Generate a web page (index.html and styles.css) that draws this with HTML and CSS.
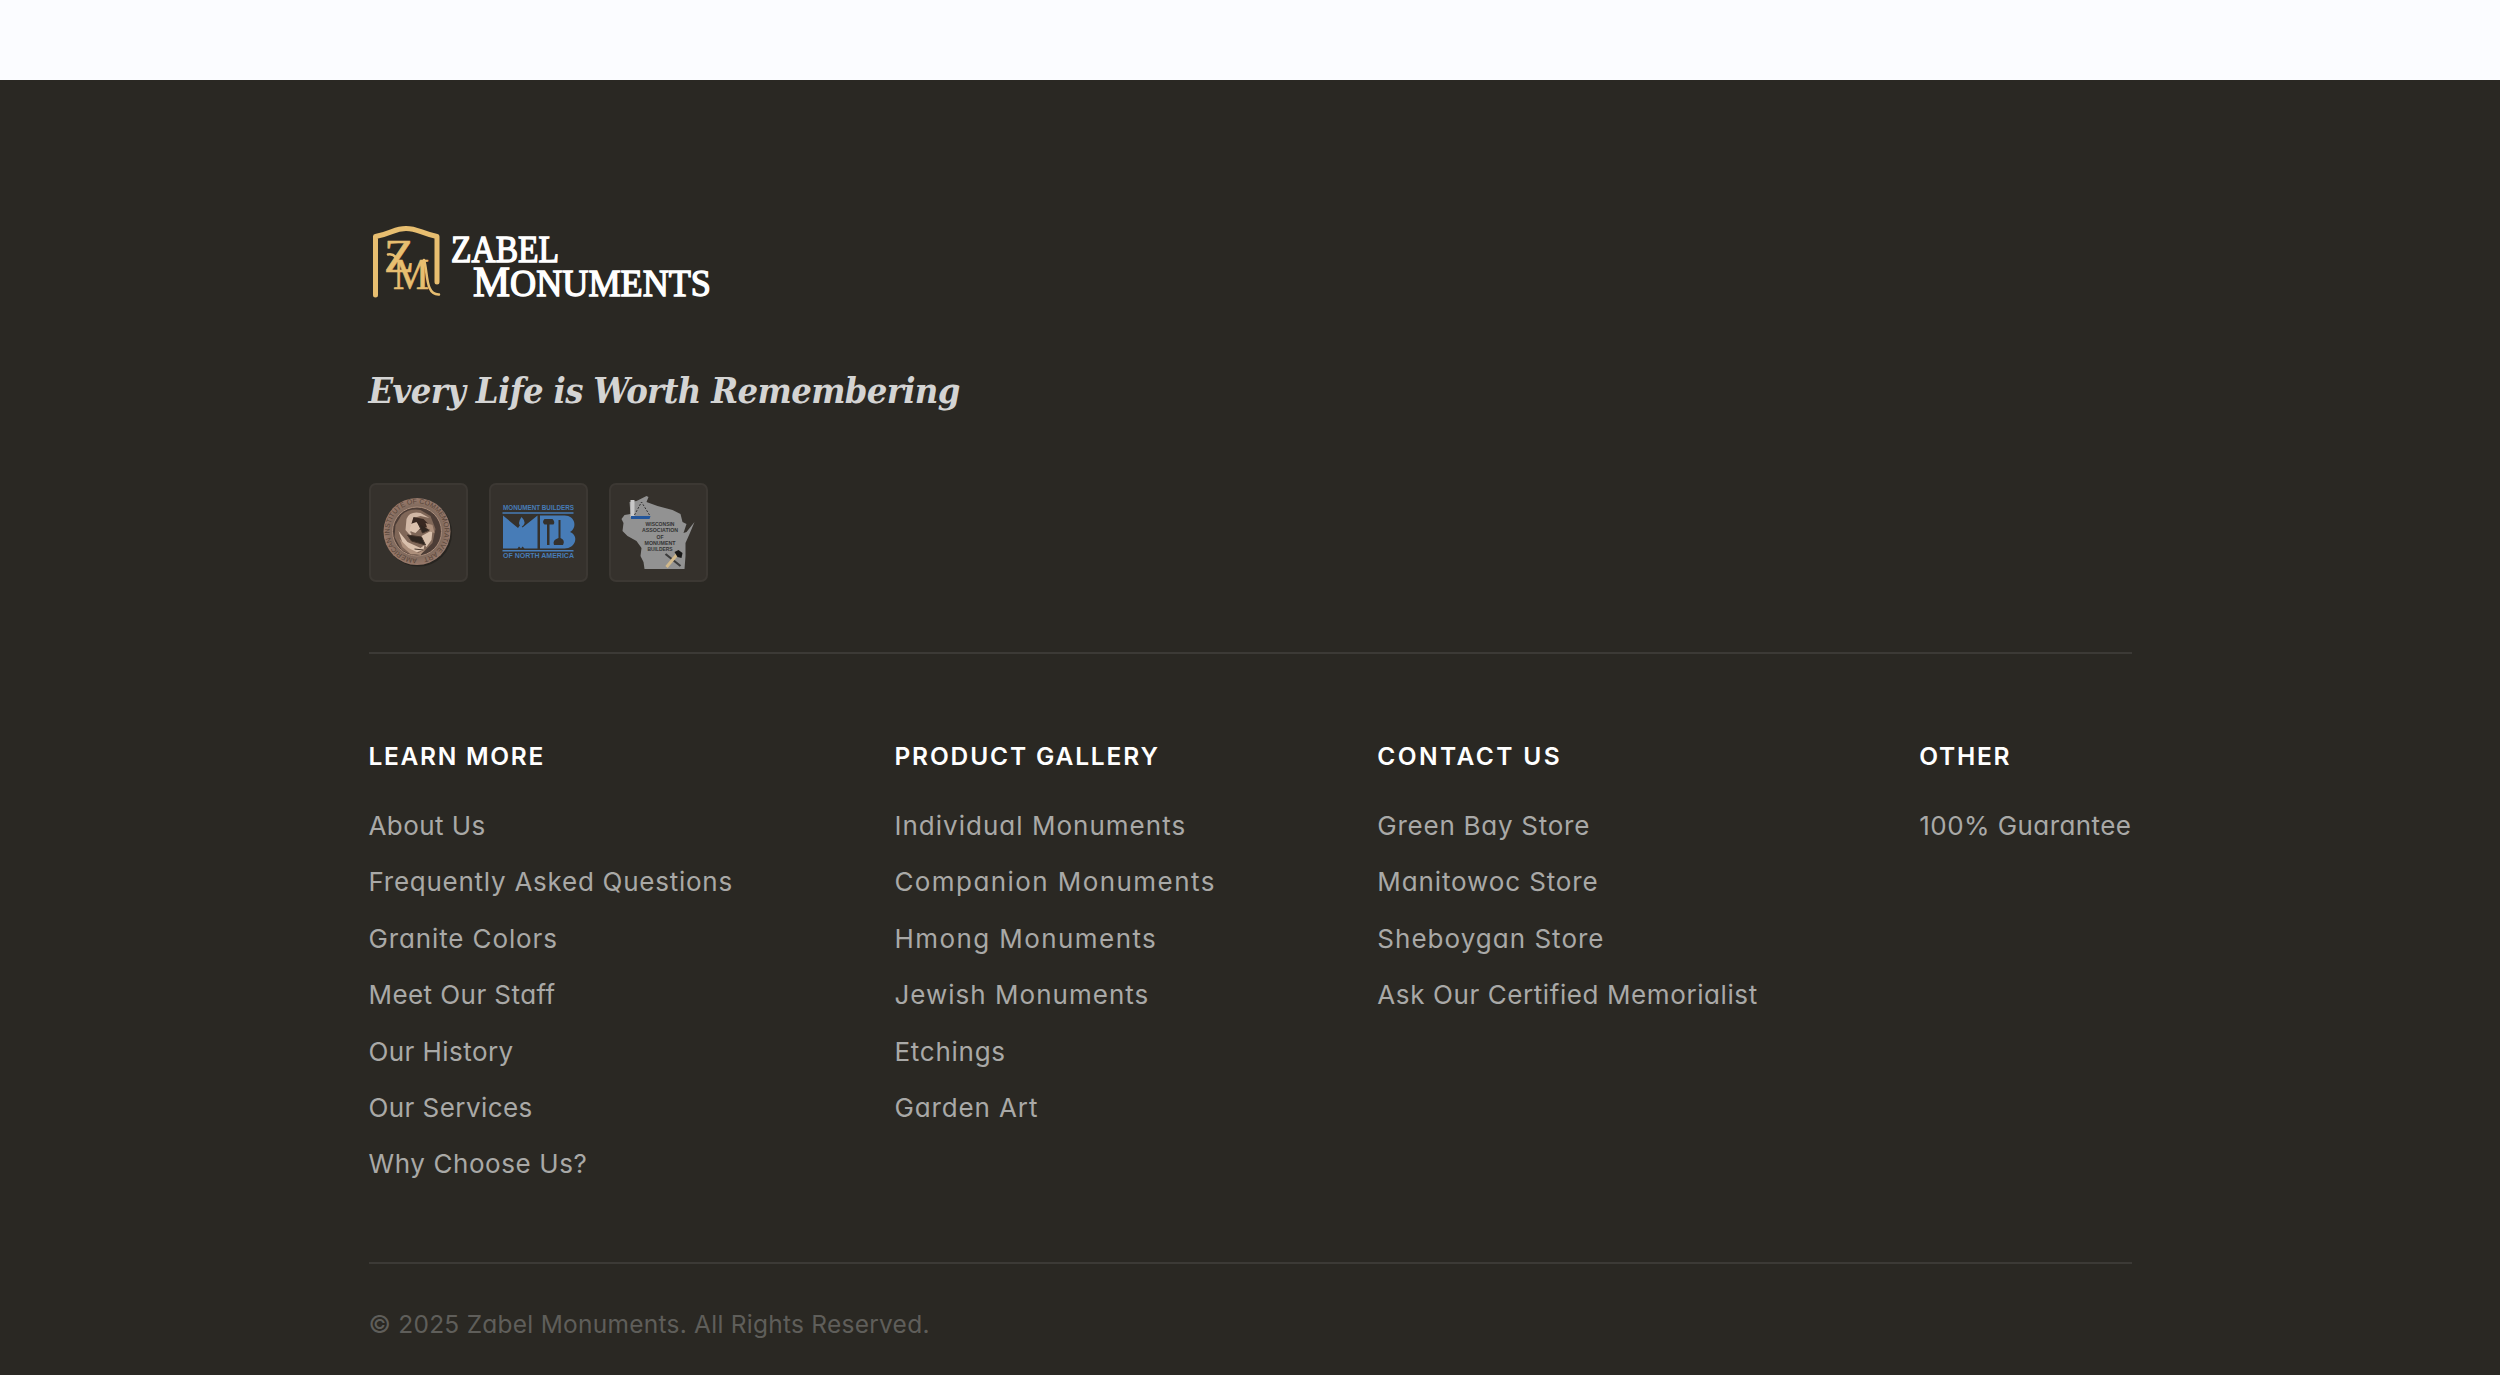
FILE: index.html
```html
<!DOCTYPE html>
<html lang="en">
<head>
<meta charset="utf-8">
<title>Zabel Monuments</title>
<link rel="stylesheet" href="styles.css">
</head>
<body>
<footer class="footer">
  <div class="inner">
    <div class="brand">
      <svg class="logo" viewBox="350 210 380 100" role="img" aria-label="Zabel Monuments">
        <g class="frame">
          <path d="M375.500 295V236.500C393 233 394 228.500 406 228.500S420 233 437 236.500V282"/>
          <path class="swash" d="M424 260C428 272 425 295 439 294.500M388 254.500q5-1 8 3"/>
        </g>
        <text class="mono" x="384" y="271.500" font-size="46" textLength="30" lengthAdjust="spacingAndGlyphs">Z</text>
        <text class="mono" x="393" y="288.500" font-size="45" textLength="36" lengthAdjust="spacingAndGlyphs">M</text>
        <g class="word">
          <text x="451" y="262" font-size="38" textLength="108" lengthAdjust="spacingAndGlyphs">ZABEL</text>
          <text x="473" y="296" font-size="43" textLength="37" lengthAdjust="spacingAndGlyphs">M</text>
          <text x="510" y="296" font-size="38" textLength="201" lengthAdjust="spacingAndGlyphs">ONUMENTS</text>
        </g>
      </svg>
      <p class="tagline">Every Life is Worth Remembering</p>
      <ul class="badges">
        <li class="badge">
          <svg viewBox="10.5 11 95 95">
            <defs>
              <radialGradient id="bronze"><stop offset=".6" stop-color="#54423a"/><stop offset=".74" stop-color="#806a5d"/><stop offset="1" stop-color="#98796a"/></radialGradient>
              <path id="ring" d="M56.500 84.500a27.500 27.500 0 1 1 .1 0"/>
            </defs>
            <circle cx="58" cy="59" r="33.500" fill="#191714" opacity=".5"/>
            <circle cx="56.500" cy="57.500" r="33.500" fill="url(#bronze)"/>
            <circle cx="56.500" cy="57.500" r="24.500" fill="#4d3d36" stroke="#ab8d7b" stroke-width="1"/>
            <text class="ring-text"><textPath href="#ring" textLength="166">AMERICAN INSTITUTE OF COMMEMORATIVE ART</textPath></text>
            <path d="M41 41q8-7 19-5l10 6 5 13-3 14-9 9-12 3-10-5-7-13 1-12z" fill="#806758"/>
            <path d="M46 45q3-8 14-6l9 5-9-2-7 2-3 8 1 11-6-7z" fill="#d0b7a5"/>
            <path d="M53 43l10 2 6 6-8 5-7-2-4 5 1-9z" fill="#382821"/>
            <path d="M50 50l6-2 4 6-5 5-6-2zM61 62l11-6-1 10-5 7-4-4zM38 57l9 11 13 6 4-3-1 5-9 3-11-7z" fill="#dac1ad"/>
            <path d="M39 65l9 9 10 5 7-4-5 6-10-1-8-7zM65 49l7 2 2 8-6-2z" fill="#ad8f7b"/>
            <path d="M47 61l14 2 4 8-14-4zM54 75l9 1M58 50l4 9 7-3" fill="#302620" stroke="#44342b"/>
          </svg>
        </li>
        <li class="badge">
          <svg viewBox="10.5 11 95 95">
            <g fill="#477cb7">
              <text class="mb-text" x="22.500" y="36.300" textLength="71" lengthAdjust="spacingAndGlyphs">MONUMENT BUILDERS</text>
              <path d="M22 38.200h71v1.600H22zM22 76h71v1.600H22z"/>
              <path d="M22.500 41.500L37.500 54 40 50.500l2 3L57 41.500V74.500H44l-2-2-1.500 2-2-2-1.500 2H22.500z"/>
              <path d="M41 43q-5 7 0 10 6-4 0-10"/>
              <path d="M59.500 41.500H84C95 41.500 97 54 89.500 58 99 62 95 74.500 84 74.500H59.500z"/>
              <text class="mb-text" x="22.500" y="84.300" textLength="71" lengthAdjust="spacingAndGlyphs">OF NORTH AMERICA</text>
            </g>
            <path d="M64 45h8q3 3 1 5.500h-4V71h-2.500V50.500H64q-3-2.500 0-5.500M78 46h2v18q5 2 2.500 7h-9q-2-5 4.500-7z" fill="#35312c"/>
          </svg>
        </li>
        <li class="badge">
          <svg viewBox="10.5 11 95 95">
            <path fill="#929292" d="M29 28l7-1 10-5 2 1-2 5 11 4 15 4 8 4 2 8 4 2-3 9 3-1 8-10-5 12-4 9 0 13-1 13H44l-1-7-3-6 1-8-5-7-9-5-5-5 1-8-2-4 3-4 6-1z"/>
            <path d="M30 26h4v17h-4z" fill="#c8c8c8"/>
            <path d="M30.500 42H50l-1 3H30.500z" fill="#23569b"/>
            <path d="M34 41l7-13 8 13" fill="none" stroke="#333" stroke-dasharray="2 1.500"/>
            <g class="wi-text">
              <text x="45" y="52" textLength="29" lengthAdjust="spacingAndGlyphs">WISCONSIN</text>
              <text x="41.500" y="58" textLength="36" lengthAdjust="spacingAndGlyphs">ASSOCIATION</text>
              <text x="56" y="64.500" textLength="7" lengthAdjust="spacingAndGlyphs">OF</text>
              <text x="44" y="70.500" textLength="31" lengthAdjust="spacingAndGlyphs">MONUMENT</text>
              <text x="47" y="76.800" textLength="25" lengthAdjust="spacingAndGlyphs">BUILDERS</text>
            </g>
            <path d="M65 80l15 12" stroke="#3b3b3b" stroke-width="2.200"/>
            <path d="M66 93L77 80" stroke="#d2b98a" stroke-width="3"/>
            <path d="M74 78l4-2 4 3-1 5-4-1z" fill="#171717"/>
          </svg>
        </li>
      </ul>
    </div>
    <nav class="columns">
      <section class="col"><h2>LEARN MORE</h2><ul>
        <li class="snug">About Us</li><li class="open">Frequently Asked Questions</li><li class="wide">Granite Colors</li><li class="snug">Meet Our Staff</li><li class="snug">Our History</li><li class="snug">Our Services</li><li class="mid">Why Choose Us?</li></ul></section>
      <section class="col"><h2 class="h-mid">PRODUCT GALLERY</h2><ul>
        <li class="wider">Individual Monuments</li><li class="widest">Companion Monuments</li><li class="widest">Hmong Monuments</li><li class="wider">Jewish Monuments</li><li class="open">Etchings</li><li class="wide">Garden Art</li></ul></section>
      <section class="col"><h2 class="h-wide">CONTACT US</h2><ul>
        <li class="open">Green Bay Store</li><li class="wide">Manitowoc Store</li><li class="wider">Sheboygan Store</li><li class="mid">Ask Our Certified Memorialist</li></ul></section>
      <section class="col"><h2>OTHER</h2><ul>
        <li class="snug">100% Guarantee</li></ul></section>
    </nav>
    <p class="legal">© 2025 Zabel Monuments. All Rights Reserved.</p>
  </div>
</footer>
</body>
</html>
```
FILE: styles.css
```css
* { box-sizing: border-box; margin: 0; padding: 0; }
body { background: #fbfcff; padding-top: 80px; font-family: Inter, sans-serif; font-feature-settings: "cv11"; }
ul { list-style: none; }
.footer { background: #2a2823; height: 1295px; padding-top: 130px; }
.inner { width: 1763px; margin: 0 auto; }
.brand { border-bottom: 2px solid #3c3a36; height: 444px; }
.logo { display: block; width: 380px; height: 100px; margin-left: -18.5px; }
.frame { fill: none; stroke: #e7be70; stroke-width: 5; stroke-linecap: round; stroke-linejoin: round; }
.swash { stroke-width: 2.5; }
.mono { font-family: "Liberation Serif", serif; fill: #e7be70; stroke: #e7be70; stroke-width: .6; }
.word { font-family: "Liberation Serif", serif; fill: #fff; stroke: #fff; stroke-width: 1.4; }
.tagline { margin-top: 50px; height: 60px; font: italic bold 36px/60px "DejaVu Serif Condensed", "DejaVu Serif", serif; letter-spacing: -.65px; color: #d4d4d3; white-space: nowrap; }
.badges { display: flex; gap: 21px; margin-top: 63px; }
.badge { width: 99px; height: 99px; background: #35312c; border: 2px solid #3c3833; border-radius: 7px; }
.badge svg { display: block; width: 95px; height: 95px; }
.ring-text { font: 7px "Liberation Sans", sans-serif; fill: #584539; }
.mb-text { font: bold 6.5px "Liberation Sans", sans-serif; }
.wi-text { font: bold 6px "Liberation Sans", sans-serif; fill: #333; }
.columns { display: flex; justify-content: space-between; height: 610px; padding-top: 82px; border-bottom: 2px solid #3c3a36; }
.col h2 { font-size: 24.5px; font-weight: 600; line-height: 40px; letter-spacing: 1.7px; color: #fff; margin-bottom: 22px; }
.col .h-mid { letter-spacing: 1.85px; }
.col .h-wide { letter-spacing: 2.4px; }
.col li { height: 56.4px; line-height: 40px; padding-top: 8px; font-size: 26px; color: #a9a9a7; white-space: nowrap; }
.snug { letter-spacing: .43px; }
.mid { letter-spacing: .59px; }
.open { letter-spacing: .74px; }
.wide { letter-spacing: .88px; }
.wider { letter-spacing: 1.02px; }
.widest { letter-spacing: 1.43px; }
.legal { margin-top: 38px; font-size: 24.5px; line-height: 44px; letter-spacing: .25px; color: #5f5e5a; }
```
